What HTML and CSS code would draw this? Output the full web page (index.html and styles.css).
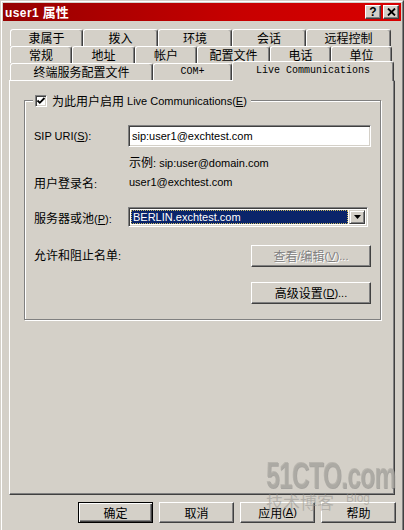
FILE: index.html
```html
<!DOCTYPE html>
<html>
<head>
<meta charset="utf-8">
<link rel="stylesheet" href="styles.css">
</head>
<body>
<div class="window">
  <div class="frame">
    <div class="titlebar">
      <span class="title">user1 <span class="title-cn">属性</span></span>
      <div class="tb-buttons">
        <span class="tb-btn help">?</span>
        <span class="tb-btn close"><svg width="9" height="8" viewBox="0 0 9 8"><path d="M1 0.5 L8 7.5 M8 0.5 L1 7.5" stroke="#000" stroke-width="1.8" fill="none"/></svg></span>
      </div>
    </div>
    <div class="content">
      <div class="tabs">
        <div class="tab-row">
          <div class="tab w73">隶属于</div>
          <div class="tab w75">拨入</div>
          <div class="tab w74">环境</div>
          <div class="tab w74">会话</div>
          <div class="tab w85">远程控制</div>
        </div>
        <div class="tab-row">
          <div class="tab w62">常规</div>
          <div class="tab w63">地址</div>
          <div class="tab w62">帐户</div>
          <div class="tab w73">配置文件</div>
          <div class="tab w61">电话</div>
          <div class="tab w61">单位</div>
        </div>
        <div class="tab-row">
          <div class="tab w143">终端服务配置文件</div>
          <div class="tab w79 mono">COM+</div>
          <div class="tab sel mono">Live Communications</div>
        </div>
      </div>
      <div class="panel">
        <div class="group">
          <div class="legend">
            <span class="check"><svg width="10" height="10" viewBox="0 0 10 10"><path d="M1.5 4.5 L3.8 6.8 L8.5 2" stroke="#000" stroke-width="1.8" fill="none"/></svg></span>
            <span class="cn">为此用户启用</span><span class="en">Live Communications(<u>E</u>)</span>
          </div>
          <div class="row sip">
            <span class="label">SIP URI(<u>S</u>):</span>
            <div class="input">sip:user1@exchtest.com</div>
          </div>
          <div class="row line">
            <span class="label"></span>
            <span class="value"><span class="cn">示例</span>: sip:user@domain.com</span>
          </div>
          <div class="row line">
            <span class="label"><span class="cn">用户登录名</span>:</span>
            <span class="value">user1@exchtest.com</span>
          </div>
          <div class="row server">
            <span class="label"><span class="cn">服务器或池</span>(<u>P</u>):</span>
            <div class="select">
              <div class="sel-value">BERLIN.exchtest.com</div>
              <div class="sel-btn"><svg width="7" height="4" viewBox="0 0 7 4"><path d="M0 0 H7 L3.5 4 Z" fill="#000"/></svg></div>
            </div>
          </div>
          <div class="row acl">
            <span class="label acl-label"><span class="cn">允许和阻止名单</span>:</span>
            <button class="btn wide disabled"><span class="cn">查看</span>/<span class="cn">编辑</span>(<u>V</u>)...</button>
          </div>
          <div class="row adv">
            <button class="btn wide"><span class="cn">高级设置</span>(<u>D</u>)...</button>
          </div>
        </div>
      </div>
      <div class="footer">
        <button class="btn default"><span class="cn">确定</span></button>
        <button class="btn"><span class="cn">取消</span></button>
        <button class="btn"><span class="cn">应用</span>(<u>A</u>)</button>
        <button class="btn"><span class="cn">帮助</span></button>
      </div>
    </div>
  </div>
  <div class="watermark">
    <div class="wm-big">51CTO.com</div>
    <div class="wm-small"><span class="wm-cn">技术博客</span><span class="wm-blog">Blog</span></div>
  </div>
</div>
</body>
</html>
```
FILE: styles.css
```css
* { box-sizing: border-box; }
html, body { margin: 0; padding: 0; overflow: hidden; }
body {
  background: #d4d0c8;
  font-family: "Liberation Sans", "Noto Sans CJK SC", sans-serif;
  font-size: 11px;
  color: #000;
}
.cn { font-family: "Noto Sans CJK SC", sans-serif; font-size: 12px; }
u { text-decoration: underline; text-underline-offset: 1px; }

.window {
  width: 404px;
  height: 530px;
  border: 1px solid;
  border-bottom: 0;
  border-color: #d4d0c8 #404040 #404040 #d4d0c8;
  background: #d4d0c8;
  position: relative;
  overflow: hidden;
}
.frame {
  height: 100%;
  border: 1px solid;
  border-bottom: 0;
  border-color: #fff #808080 #808080 #fff;
  padding: 1px 1px 0 1px;
  display: flex;
  flex-direction: column;
}

.titlebar {
  height: 18px;
  flex: none;
  background: linear-gradient(to right, #960000, #c80000 60%, #d80000);
  display: flex;
  align-items: center;
  justify-content: space-between;
  padding: 0 2px 0 2px;
}
.title {
  color: #fff;
  font-weight: bold;
  font-size: 12px;
  letter-spacing: 0.4px;
  line-height: 14px;
}
.title-cn { font-family: "Noto Sans CJK SC", sans-serif; font-size: 13px; letter-spacing: 0; }
.tb-buttons { display: flex; gap: 2px; }
.tb-btn {
  width: 16px;
  height: 14px;
  background: #d4d0c8;
  border: 1px solid;
  border-color: #fff #404040 #404040 #fff;
  box-shadow: inset -1px -1px #808080;
  display: flex;
  align-items: center;
  justify-content: center;
  font-weight: bold;
  font-size: 12px;
  line-height: 12px;
}

.content {
  flex: 1;
  padding: 8px 5px 0 6px;
  display: flex;
  flex-direction: column;
}

.tabs { padding-left: 1px; }
.tab-row { display: flex; height: 17px; align-items: flex-start; }
.tab {
  flex: none;
  height: 17px;
  border: 1px solid;
  border-bottom: 0;
  border-color: #fff #404040 transparent #fff;
  border-radius: 3px 3px 0 0;
  box-shadow: inset -1px 0 #808080;
  background: #d4d0c8;
  display: flex;
  align-items: center;
  justify-content: center;
  font-family: "Noto Sans CJK SC", sans-serif;
  font-size: 12px;
  line-height: 1;
}
.tab.mono { font-family: "Liberation Mono", monospace; font-size: 10px; }
.tab.sel {
  width: 162px;
  height: 20px;
  margin-top: -2px;
  position: relative;
  z-index: 1;
  padding-bottom: 2px;
}
.w61 { width: 61px; } .w62 { width: 62px; } .w63 { width: 63px; }
.w73 { width: 73px; } .w74 { width: 74px; } .w75 { width: 75px; }
.w79 { width: 79px; } .w85 { width: 85px; } .w143 { width: 143px; }

.panel {
  width: 386px;
  height: 415px;
  flex: none;
  border: 1px solid;
  border-color: #fff #404040 #404040 #fff;
  box-shadow: inset -1px -1px #808080;
}

.group {
  margin: 19px 0 0 14px;
  width: 357px;
  border: 1px solid #808080;
  box-shadow: inset 1px 1px #fff, 1px 1px #fff;
  padding: 0 9px 15px 9px;
}
.legend {
  display: flex;
  align-items: center;
  width: max-content;
  height: 13px;
  margin: -7px 0 0 -1px;
  padding: 0 4px 0 2px;
  background: #d4d0c8;
}
.check {
  width: 12px;
  height: 12px;
  background: #fff;
  border: 1px solid;
  border-color: #808080 #fff #fff #808080;
  box-shadow: inset 1px 1px #404040, inset -1px -1px #d4d0c8;
  display: flex;
  align-items: center;
  justify-content: center;
  margin-right: 5px;
}
.legend .cn { margin-right: 3px; }

.row { display: flex; align-items: center; }
.label { width: 94px; flex: none; white-space: nowrap; }
.value { padding-left: 1px; white-space: nowrap; }
.sip { margin-top: 18px; height: 22px; }
.line { margin-top: 7px; height: 14px; }
.server { margin-top: 18px; height: 20px; }
.acl { margin-top: 18px; height: 22px; align-items: flex-start; justify-content: space-between; }
.acl-label { margin-top: 1px; }
.adv { margin-top: 15px; height: 22px; justify-content: flex-end; }

.input {
  flex: 1;
  height: 22px;
  background: #fff;
  border: 1px solid;
  border-color: #808080 #fff #fff #808080;
  box-shadow: inset 1px 1px #404040, inset -1px -1px #d4d0c8;
  padding-left: 3px;
  display: flex;
  align-items: center;
}
.select {
  width: 240px;
  height: 20px;
  background: #fff;
  border: 1px solid;
  border-color: #808080 #fff #fff #808080;
  box-shadow: inset 1px 1px #404040, inset -1px -1px #d4d0c8;
  padding: 2px;
  display: flex;
  gap: 1px;
}
.sel-value {
  flex: 1;
  background: #0a246a;
  color: #fff;
  outline: 1px dotted #c8b860;
  outline-offset: -1px;
  padding-left: 2px;
  display: flex;
  align-items: center;
}
.sel-btn {
  width: 16px;
  background: #d4d0c8;
  border: 1px solid;
  border-color: #d4d0c8 #404040 #404040 #d4d0c8;
  box-shadow: inset 1px 1px #fff, inset -1px -1px #808080;
  display: flex;
  align-items: center;
  justify-content: center;
}

.btn {
  width: 75px;
  height: 21px;
  padding: 0;
  margin: 0;
  background: #d4d0c8;
  border: 1px solid;
  border-color: #fff #404040 #404040 #fff;
  box-shadow: inset -1px -1px #808080;
  display: flex;
  align-items: center;
  justify-content: center;
  font-family: "Liberation Sans", "Noto Sans CJK SC", sans-serif;
  font-size: 11px;
  color: #000;
  line-height: 1;
}
.btn.wide { width: 120px; height: 22px; }
.btn.disabled { color: #808080; text-shadow: 1px 1px #fff; }
.btn.default {
  border-color: #000;
  box-shadow: inset 1px 1px #fff, inset -1px -1px #404040, inset -2px -2px #808080;
}

.footer {
  display: flex;
  justify-content: flex-end;
  gap: 6px;
  margin-top: 7px;
}

.watermark {
  position: absolute;
  left: 265px;
  top: 458px;
  pointer-events: none;
}
.wm-big {
  font-family: "Liberation Sans", sans-serif;
  font-weight: bold;
  font-size: 36px;
  line-height: 34px;
  letter-spacing: -1px;
  color: rgba(175, 172, 166, 0.75);
  text-shadow: 1px 1px rgba(110, 110, 110, 0.45);
  transform: scaleX(0.68);
  transform-origin: left center;
  white-space: nowrap;
}
.wm-small {
  display: flex;
  align-items: flex-start;
  gap: 12px;
  margin-top: 0px;
}
.wm-cn {
  font-family: "Noto Sans CJK SC", sans-serif;
  font-size: 17px;
  line-height: 18px;
  color: rgba(150, 148, 144, 0.55);
}
.wm-blog {
  font-family: "Liberation Sans", sans-serif;
  font-size: 12px;
  color: rgba(150, 148, 144, 0.55);
  margin-top: -2px;
}
```
